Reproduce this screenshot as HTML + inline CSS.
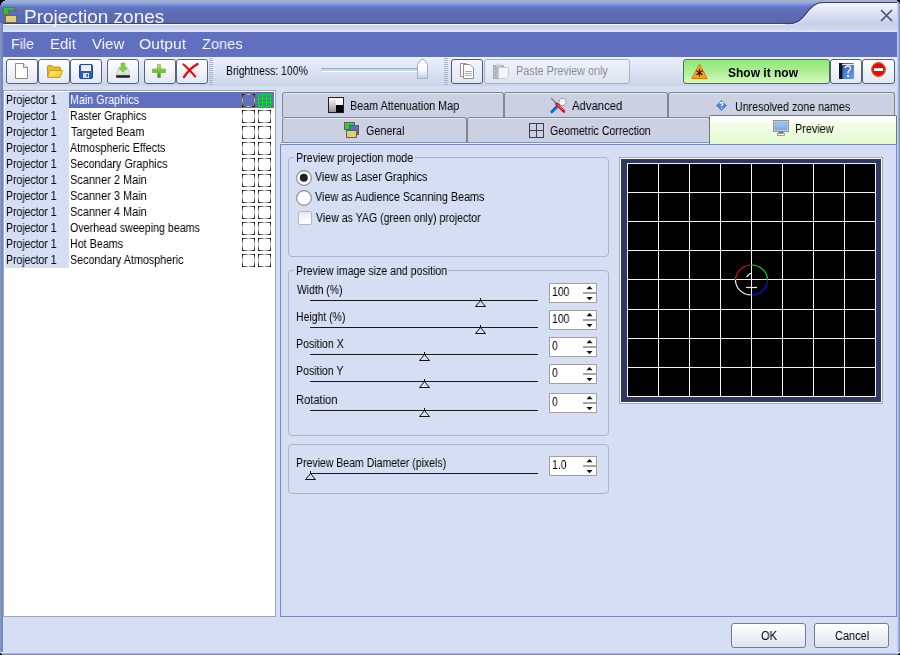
<!DOCTYPE html>
<html><head><meta charset="utf-8"><style>
html,body{margin:0;padding:0;}
body{width:900px;height:655px;overflow:hidden;position:relative;background:#d5def2;font-family:"Liberation Sans",sans-serif;}
.a{position:absolute;}
.t{position:absolute;font-size:12px;line-height:12px;white-space:nowrap;color:#000;transform-origin:0 0;will-change:transform;}
svg{position:absolute;overflow:visible;}
#frameL{left:0;top:23px;width:3px;height:632px;background:linear-gradient(90deg,#8a98b8 0,#8a98b8 1px,#7488d4 1px,#7488d4 3px);}
#frameR{left:897px;top:3px;width:3px;height:652px;background:linear-gradient(90deg,#c4d0ee 0,#c4d0ee 1px,#a0b0e2 1px,#a0b0e2 2px,#8494c4 2px);}
#frameB{left:0;top:652px;width:900px;height:3px;background:linear-gradient(180deg,#dfe6f6 0,#dfe6f6 1px,#9eb0e0 1px,#9eb0e0 2px,#8494c0 2px);}
#title{left:0;top:0;width:900px;height:24px;background:linear-gradient(180deg,#a8b0c8 0,#a8b0c8 1px,#90b0ec 1px,#8eaaea 3px,#6c80cc 6px,#6070bc 9px,#5d6bb4 14px,#5968ae 23px);}
#titleLine{left:0;top:23px;width:900px;height:1px;background:#3a4294;}
#ttl{left:24px;top:7px;font-size:18px;line-height:20px;color:#fff;letter-spacing:.4px;}
#strip{left:3px;top:24px;width:894px;height:8px;background:linear-gradient(180deg,#f4f6fc 0,#f4f6fc 1px,#c9d2ec 1px,#d3dbf0 6px,#e2e8f5 7px,#d7def2 8px);border-top-left-radius:4px;}
#menu{left:3px;top:32px;width:894px;height:25px;background:#6070bf;}
.m{position:absolute;top:36px;font-size:14px;line-height:16px;color:#f4f4ff;}
#tb{left:3px;top:57px;width:894px;height:29px;background:linear-gradient(180deg,#f2f4fc 0,#e7ebfa 3px,#dde3f3 15px,#cbd3e7 29px);}
#tbb{left:3px;top:86px;width:894px;height:4px;background:#d5def2;}
.btn{position:absolute;top:59px;height:25px;width:32px;border:1px solid #566479;border-radius:3px;background:linear-gradient(180deg,#ffffff 0,#f4f7fc 35%,#dfe8f4 100%);box-sizing:border-box;}
.grip{position:absolute;width:4px;background-image:repeating-linear-gradient(180deg,#aab4c8 0,#aab4c8 1px,transparent 1px,transparent 2px);}
#list{left:3px;top:90px;width:273px;height:527px;box-sizing:border-box;border:1px solid #a2a6b4;background:#fff;}
.lc{position:absolute;left:5px;width:64px;height:16px;background:#d5def2;}
.ck{position:absolute;width:13px;height:13px;box-sizing:border-box;border:1px solid #111;}
.tab{position:absolute;box-sizing:border-box;border:1px solid #7d8a8c;border-bottom:none;border-radius:3px 3px 0 0;background:#cbd1e3;box-shadow:inset 0 1px 0 #e6e9f2;}
#panel{left:280px;top:144px;width:617px;height:473px;box-sizing:border-box;border:1px solid #7a8ab8;background:#d5def2;}
.grp{position:absolute;box-sizing:border-box;border:1px solid #a9b3cb;border-radius:4px;}
.gl{position:absolute;background:#d5def2;}
.sl{position:absolute;left:310px;width:228px;height:1px;background:#1a1a1a;}
.sp{position:absolute;left:549px;width:48px;height:20px;box-sizing:border-box;border:1px solid #a0a0a0;background:#fff;}
.spl{position:absolute;left:33px;top:8px;width:14px;height:2px;background:#a4a4a4;}
.obtn{position:absolute;top:623px;height:25px;box-sizing:border-box;border:1px solid #6f7f88;border-radius:3px;background:linear-gradient(180deg,#ffffff 0,#f5f7fb 30%,#e4e9f3 80%,#dbe4f0 100%);}
</style></head><body>
<div id="title" class="a"></div><div id="titleLine" class="a"></div>
<div id="strip" class="a"></div><div id="menu" class="a"></div>
<svg width="900" height="32" style="left:0;top:0"><defs><linearGradient id="tg" x1="0" y1="0" x2="0" y2="1"><stop offset="0" stop-color="#f6f8fd"/><stop offset=".45" stop-color="#dde2f3"/><stop offset="1" stop-color="#c2d0e9"/></linearGradient></defs>
<path d="M786 25 V23.5 L790 23.5 C806 23.5 807 2.5 823 2.5 L897 2.5 L897 25 Z" fill="url(#tg)"/>
<path d="M791 24.4 C807 24.4 808 3.4 823 3.4" fill="none" stroke="#ffffff" stroke-width="1"/>
<path d="M780 23.5 L790 23.5 C806 23.5 807 2.5 823 2.5 L897 2.5" fill="none" stroke="#38408e" stroke-width="1.2"/>
<path d="M881.5 10.5 L891.5 20.5 M891.5 10.5 L881.5 20.5" stroke="#4a5478" stroke-width="1.7" stroke-linecap="round"/>
<rect x="3.5" y="7.5" width="11" height="7" fill="#22cc22" stroke="#686868"/>
<rect x="8.5" y="10.5" width="9" height="9" fill="#5070d0" stroke="#686868"/>
<rect x="5.5" y="15.5" width="11" height="7" fill="#e8cc6c" stroke="#686868"/>
<path d="M0 0 H5 V1 H3 V2 H2 V3 H1 V5 H0 Z" fill="#000"/>
<path d="M897 0 H900 V4 H899 V2 H898 V1 H897 Z" fill="#000"/>
</svg>
<div class="t" style="left:23.95px;top:8px;font-size:18px;line-height:18px;transform:scaleX(1.0538);color:#f4f6ff;">Projection zones</div>
<div class="t" style="left:11.05px;top:36px;font-size:15px;line-height:15px;transform:scaleX(0.9545);color:#f4f4ff;">File</div>
<div class="t" style="left:50.00px;top:36px;font-size:15px;line-height:15px;transform:scaleX(1.0000);color:#f4f4ff;">Edit</div>
<div class="t" style="left:92.00px;top:36px;font-size:15px;line-height:15px;transform:scaleX(1.0000);color:#f4f4ff;">View</div>
<div class="t" style="left:138.95px;top:36px;font-size:15px;line-height:15px;transform:scaleX(1.0465);color:#f4f4ff;">Output</div>
<div class="t" style="left:202.00px;top:36px;font-size:15px;line-height:15px;transform:scaleX(0.9750);color:#f4f4ff;">Zones</div>
<div id="tb" class="a"></div><div id="tbb" class="a"></div>
<div class="btn" style="left:6px"></div>
<div class="btn" style="left:38px"></div>
<div class="btn" style="left:70px"></div>
<div class="btn" style="left:107px"></div>
<div class="btn" style="left:144px"></div>
<div class="btn" style="left:176px"></div>
<div class="grip" style="left:209px;top:58px;height:27px"></div>
<div class="t" style="left:226.13px;top:65px;transform:scaleX(0.8696);color:#000;">Brightness: 100%</div>
<div class="a" style="left:321px;top:68px;width:100px;height:1px;background:#8fb0d2"></div>
<div class="a" style="left:321px;top:69px;width:100px;height:2px;background:#c9d8e9"></div>
<div class="a" style="left:322px;top:71px;width:99px;height:1px;background:#fff"></div>
<svg width="11" height="20" style="left:417px;top:59px"><defs><linearGradient id="thg" x1="0" y1="0" x2="0" y2="1"><stop offset="0" stop-color="#fff"/><stop offset=".55" stop-color="#f8fbff"/><stop offset="1" stop-color="#b8d0ec"/></linearGradient></defs><path d="M0.5 19.5 V5.5 L4 0.5 H7 L10.5 5.5 V19.5 Z" fill="url(#thg)" stroke="#a4acb8"/></svg>
<div class="grip" style="left:444px;top:58px;height:27px"></div>
<div class="btn" style="left:451px;border-color:#4d5a70;background:linear-gradient(180deg,#f4f7fc,#dfe6f2)"></div>
<div class="btn" style="left:484px;width:146px;border-color:#a8b2c6;background:linear-gradient(180deg,#eef2fa,#dde4f1)"></div>
<div class="t" style="left:516.10px;top:65px;transform:scaleX(0.9000);color:#8a8a8a;">Paste Preview only</div>
<div class="btn" style="left:683px;width:147px;border-color:#56647a;background:linear-gradient(180deg,#92e878 0,#aaee90 45%,#d2f8c2 100%)"></div>
<div class="t" style="left:728px;top:67px;font-weight:bold;font-size:12px;letter-spacing:0px">Show it now</div>
<div class="btn" style="left:830px"></div>
<div class="btn" style="left:862px;width:33px"></div>
<div id="list" class="a"></div>
<div class="lc" style="top:92px"></div>
<div class="lc" style="top:108px"></div>
<div class="lc" style="top:124px"></div>
<div class="lc" style="top:140px"></div>
<div class="lc" style="top:156px"></div>
<div class="lc" style="top:172px"></div>
<div class="lc" style="top:188px"></div>
<div class="lc" style="top:204px"></div>
<div class="lc" style="top:220px"></div>
<div class="lc" style="top:236px"></div>
<div class="lc" style="top:252px"></div>
<div class="a" style="left:69px;top:92px;width:205px;height:16px;background:#6070bf"></div>
<div class="t" style="left:6.13px;top:94px;transform:scaleX(0.8727);color:#000;">Projector 1</div>
<div class="t" style="left:70.11px;top:94px;transform:scaleX(0.8933);color:#fff;">Main Graphics</div>
<div class="t" style="left:6.13px;top:110px;transform:scaleX(0.8727);color:#000;">Projector 1</div>
<div class="t" style="left:70.12px;top:110px;transform:scaleX(0.8810);color:#000;">Raster Graphics</div>
<div class="t" style="left:6.13px;top:126px;transform:scaleX(0.8727);color:#000;">Projector 1</div>
<div class="t" style="left:71.00px;top:126px;transform:scaleX(0.9000);color:#000;">Targeted Beam</div>
<div class="t" style="left:6.13px;top:142px;transform:scaleX(0.8727);color:#000;">Projector 1</div>
<div class="t" style="left:70.00px;top:142px;transform:scaleX(0.8952);color:#000;">Atmospheric Effects</div>
<div class="t" style="left:6.13px;top:158px;transform:scaleX(0.8727);color:#000;">Projector 1</div>
<div class="t" style="left:70.10px;top:158px;transform:scaleX(0.8962);color:#000;">Secondary Graphics</div>
<div class="t" style="left:6.13px;top:174px;transform:scaleX(0.8727);color:#000;">Projector 1</div>
<div class="t" style="left:70.09px;top:174px;transform:scaleX(0.9136);color:#000;">Scanner 2 Main</div>
<div class="t" style="left:6.13px;top:190px;transform:scaleX(0.8727);color:#000;">Projector 1</div>
<div class="t" style="left:70.09px;top:190px;transform:scaleX(0.9136);color:#000;">Scanner 3 Main</div>
<div class="t" style="left:6.13px;top:206px;transform:scaleX(0.8727);color:#000;">Projector 1</div>
<div class="t" style="left:70.09px;top:206px;transform:scaleX(0.9136);color:#000;">Scanner 4 Main</div>
<div class="t" style="left:6.13px;top:222px;transform:scaleX(0.8727);color:#000;">Projector 1</div>
<div class="t" style="left:70.11px;top:222px;transform:scaleX(0.8889);color:#000;">Overhead sweeping beams</div>
<div class="t" style="left:6.13px;top:238px;transform:scaleX(0.8727);color:#000;">Projector 1</div>
<div class="t" style="left:70.11px;top:238px;transform:scaleX(0.8947);color:#000;">Hot Beams</div>
<div class="t" style="left:6.13px;top:254px;transform:scaleX(0.8727);color:#000;">Projector 1</div>
<div class="t" style="left:70.10px;top:254px;transform:scaleX(0.8952);color:#000;">Secondary Atmospheric</div>
<svg width="30" height="180" style="left:242px;top:94px"><defs><linearGradient id="ch" x1="0" y1="0" x2="1" y2="0"><stop offset="0" stop-color="#000"/><stop offset=".5" stop-color="#c8c8c8"/><stop offset="1" stop-color="#000"/></linearGradient><linearGradient id="cv" x1="0" y1="0" x2="0" y2="1"><stop offset="0" stop-color="#000"/><stop offset=".5" stop-color="#c8c8c8"/><stop offset="1" stop-color="#000"/></linearGradient><g id="cb"><rect x="0" y="0" width="13" height="1" fill="url(#ch)"/><rect x="0" y="12" width="13" height="1" fill="url(#ch)"/><rect x="0" y="0" width="1" height="13" fill="url(#cv)"/><rect x="12" y="0" width="1" height="13" fill="url(#cv)"/></g></defs><use href="#cb" x="0" y="0"/><use href="#cb" x="0" y="16"/><use href="#cb" x="16" y="16"/><use href="#cb" x="0" y="32"/><use href="#cb" x="16" y="32"/><use href="#cb" x="0" y="48"/><use href="#cb" x="16" y="48"/><use href="#cb" x="0" y="64"/><use href="#cb" x="16" y="64"/><use href="#cb" x="0" y="80"/><use href="#cb" x="16" y="80"/><use href="#cb" x="0" y="96"/><use href="#cb" x="16" y="96"/><use href="#cb" x="0" y="112"/><use href="#cb" x="16" y="112"/><use href="#cb" x="0" y="128"/><use href="#cb" x="16" y="128"/><use href="#cb" x="0" y="144"/><use href="#cb" x="16" y="144"/><use href="#cb" x="0" y="160"/><use href="#cb" x="16" y="160"/><path d="M16.5 0.5 H28.5 V12.5 H16.5 Z M20.5 0.5 V12.5 M24.5 0.5 V12.5 M16.5 4.5 H28.5 M16.5 8.5 H28.5" fill="none" stroke="#18d840" stroke-width="1"/></svg>
<div id="panel" class="a"></div>
<div class="tab" style="left:282px;top:92px;width:222px;height:25px"></div>
<div class="tab" style="left:504px;top:92px;width:164px;height:25px"></div>
<div class="tab" style="left:668px;top:92px;width:227px;height:25px"></div>
<div class="tab" style="left:282px;top:117px;width:185px;height:25px"></div>
<div class="tab" style="left:467px;top:117px;width:243px;height:25px"></div>
<div class="a" style="left:281px;top:142px;width:429px;height:1px;background:#8090c0"></div>
<div class="a" style="left:281px;top:143px;width:429px;height:1px;background:#f0f4d4"></div>
<div class="a" style="left:709px;top:115px;width:188px;height:29px;box-sizing:border-box;border:1px solid #66806a;border-bottom:none;border-radius:2px 2px 0 0;background:linear-gradient(180deg,#ffffff 0,#ffffff 5px,#f7fdea 6px,#eefce0 14px,#e4fbd0 100%)"></div>
<div class="t" style="left:350.10px;top:100px;transform:scaleX(0.8992);color:#000;">Beam Attenuation Map</div>
<div class="t" style="left:572.00px;top:100px;transform:scaleX(0.9423);color:#000;">Advanced</div>
<div class="t" style="left:735.11px;top:101px;transform:scaleX(0.8898);color:#000;">Unresolved zone names</div>
<div class="t" style="left:366.10px;top:125px;transform:scaleX(0.9000);color:#000;">General</div>
<div class="t" style="left:550.12px;top:125px;transform:scaleX(0.8829);color:#000;">Geometric Correction</div>
<div class="t" style="left:795.10px;top:123px;transform:scaleX(0.9024);color:#000;">Preview</div>
<div class="grp" style="left:288px;top:157px;width:321px;height:100px"></div>
<div class="gl" style="left:294px;top:152px;width:121px;height:10px"></div>
<div class="t" style="left:296.11px;top:152px;transform:scaleX(0.8915);color:#000;">Preview projection mode</div>
<svg width="16" height="16" style="left:296px;top:170px"><circle cx="8" cy="8" r="7.4" fill="#fff" stroke="#8a8a8a" stroke-width="1.1"/><circle cx="7.8" cy="7.8" r="4" fill="#222"/></svg>
<svg width="16" height="16" style="left:296px;top:190px"><circle cx="8" cy="8" r="7.4" fill="#fff" stroke="#8a8a8a" stroke-width="1.1"/></svg>
<div class="a" style="left:298px;top:211px;width:14px;height:14px;box-sizing:border-box;border:1px solid #b2b8c2;border-radius:2px;background:linear-gradient(180deg,#e4e6ea 0,#f4f5f7 40%,#ffffff 100%)"></div>
<div class="t" style="left:315.00px;top:171px;transform:scaleX(0.8880);color:#000;">View as Laser Graphics</div>
<div class="t" style="left:315.00px;top:191px;transform:scaleX(0.8984);color:#000;">View as Audience Scanning Beams</div>
<div class="t" style="left:316.00px;top:212px;transform:scaleX(0.8817);color:#000;">View as YAG (green only) projector</div>
<div class="grp" style="left:288px;top:270px;width:321px;height:166px"></div>
<div class="gl" style="left:294px;top:265px;width:154px;height:10px"></div>
<div class="t" style="left:296.12px;top:265px;transform:scaleX(0.8817);color:#000;">Preview image size and position</div>
<div class="t" style="left:297.00px;top:284px;transform:scaleX(0.8627);color:#000;">Width (%)</div>
<div class="t" style="left:296.13px;top:311px;transform:scaleX(0.8704);color:#000;">Height (%)</div>
<div class="t" style="left:296.12px;top:338px;transform:scaleX(0.8846);color:#000;">Position X</div>
<div class="t" style="left:296.12px;top:365px;transform:scaleX(0.8824);color:#000;">Position Y</div>
<div class="t" style="left:296.07px;top:394px;transform:scaleX(0.9286);color:#000;">Rotation</div>
<div class="sl" style="top:300px"></div>
<div class="sl" style="top:327px"></div>
<div class="sl" style="top:354px"></div>
<div class="sl" style="top:381px"></div>
<div class="sl" style="top:410px"></div>
<svg width="13" height="10" style="left:474px;top:298px"><rect x="6" y="0" width="1" height="2" fill="#111"/><path d="M6.5 2.5 L1.5 8.5 H11.5 Z" fill="none" stroke="#111" stroke-width="1"/></svg>
<svg width="13" height="10" style="left:474px;top:325px"><rect x="6" y="0" width="1" height="2" fill="#111"/><path d="M6.5 2.5 L1.5 8.5 H11.5 Z" fill="none" stroke="#111" stroke-width="1"/></svg>
<svg width="13" height="10" style="left:418px;top:352px"><rect x="6" y="0" width="1" height="2" fill="#111"/><path d="M6.5 2.5 L1.5 8.5 H11.5 Z" fill="none" stroke="#111" stroke-width="1"/></svg>
<svg width="13" height="10" style="left:418px;top:379px"><rect x="6" y="0" width="1" height="2" fill="#111"/><path d="M6.5 2.5 L1.5 8.5 H11.5 Z" fill="none" stroke="#111" stroke-width="1"/></svg>
<svg width="13" height="10" style="left:418px;top:408px"><rect x="6" y="0" width="1" height="2" fill="#111"/><path d="M6.5 2.5 L1.5 8.5 H11.5 Z" fill="none" stroke="#111" stroke-width="1"/></svg>
<div class="sp" style="top:283px"><div class="spl"></div><svg width="10" height="20" style="left:35px;top:0"><path d="M4.5 2 L7.6 5.2 L1.4 5.2 Z M1.4 13 L7.6 13 L4.5 16.2 Z" fill="#111"/></svg></div>
<div class="t" style="left:552px;top:286px;transform:scaleX(.87)">100</div>
<div class="sp" style="top:310px"><div class="spl"></div><svg width="10" height="20" style="left:35px;top:0"><path d="M4.5 2 L7.6 5.2 L1.4 5.2 Z M1.4 13 L7.6 13 L4.5 16.2 Z" fill="#111"/></svg></div>
<div class="t" style="left:552px;top:313px;transform:scaleX(.87)">100</div>
<div class="sp" style="top:337px"><div class="spl"></div><svg width="10" height="20" style="left:35px;top:0"><path d="M4.5 2 L7.6 5.2 L1.4 5.2 Z M1.4 13 L7.6 13 L4.5 16.2 Z" fill="#111"/></svg></div>
<div class="t" style="left:552px;top:340px;transform:scaleX(.87)">0</div>
<div class="sp" style="top:364px"><div class="spl"></div><svg width="10" height="20" style="left:35px;top:0"><path d="M4.5 2 L7.6 5.2 L1.4 5.2 Z M1.4 13 L7.6 13 L4.5 16.2 Z" fill="#111"/></svg></div>
<div class="t" style="left:552px;top:367px;transform:scaleX(.87)">0</div>
<div class="sp" style="top:393px"><div class="spl"></div><svg width="10" height="20" style="left:35px;top:0"><path d="M4.5 2 L7.6 5.2 L1.4 5.2 Z M1.4 13 L7.6 13 L4.5 16.2 Z" fill="#111"/></svg></div>
<div class="t" style="left:552px;top:396px;transform:scaleX(.87)">0</div>
<div class="grp" style="left:288px;top:444px;width:321px;height:50px"></div>
<div class="t" style="left:296.12px;top:457px;transform:scaleX(0.8757);color:#000;">Preview Beam Diameter (pixels)</div>
<div class="sl" style="top:473px"></div>
<svg width="13" height="10" style="left:304px;top:471px"><rect x="6" y="0" width="1" height="2" fill="#111"/><path d="M6.5 2.5 L1.5 8.5 H11.5 Z" fill="none" stroke="#111" stroke-width="1"/></svg>
<div class="sp" style="top:456px"><div class="spl"></div><svg width="10" height="20" style="left:35px;top:0"><path d="M4.5 2 L7.6 5.2 L1.4 5.2 Z M1.4 13 L7.6 13 L4.5 16.2 Z" fill="#111"/></svg></div>
<div class="t" style="left:552px;top:459px;transform:scaleX(.87)">1.0</div>
<div class="a" style="left:619px;top:157px;width:264px;height:247px;box-sizing:border-box;border:1px solid #a6a8b0;background:#fff"></div>
<div class="a" style="left:621px;top:159px;width:260px;height:243px;background:#2f3862"></div>
<svg width="264" height="247" style="left:619px;top:157px"><rect x="8" y="6" width="249" height="234" fill="#000"/><rect x="8" y="6" width="1" height="234" fill="#f4f4f4"/><rect x="39" y="6" width="1" height="234" fill="#f4f4f4"/><rect x="70" y="6" width="1" height="234" fill="#f4f4f4"/><rect x="101" y="6" width="1" height="234" fill="#f4f4f4"/><rect x="132" y="6" width="1" height="234" fill="#f4f4f4"/><rect x="163" y="6" width="1" height="234" fill="#f4f4f4"/><rect x="194" y="6" width="1" height="234" fill="#f4f4f4"/><rect x="225" y="6" width="1" height="234" fill="#f4f4f4"/><rect x="256" y="6" width="1" height="234" fill="#f4f4f4"/><rect x="8" y="6" width="249" height="1" fill="#f4f4f4"/><rect x="8" y="35" width="249" height="1" fill="#f4f4f4"/><rect x="8" y="64" width="249" height="1" fill="#f4f4f4"/><rect x="8" y="93" width="249" height="1" fill="#f4f4f4"/><rect x="8" y="122" width="249" height="1" fill="#f4f4f4"/><rect x="8" y="152" width="249" height="1" fill="#f4f4f4"/><rect x="8" y="181" width="249" height="1" fill="#f4f4f4"/><rect x="8" y="210" width="249" height="1" fill="#f4f4f4"/><rect x="8" y="239" width="249" height="1" fill="#f4f4f4"/></svg>
<svg width="40" height="40" style="left:731px;top:260px" viewBox="0 0 40 40"><g fill="none" stroke-width="1.2">
<path d="M4.5 20 A16 15 0 0 1 20.5 5" stroke="#e01010"/>
<path d="M20.5 5 A16 15 0 0 1 36.5 20" stroke="#10e010"/>
<path d="M36.5 20 A16 15 0 0 1 20.5 35" stroke="#1010f0"/>
<path d="M20.5 35 A16 15 0 0 1 4.5 20" stroke="#f0f0f0"/>
<path d="M15.5 17 L19 13.5 H20" stroke="#f0f0f0"/>
<path d="M15 27.5 H26" stroke="#f0f0f0"/>
</g></svg>
<div class="obtn" style="left:731px;width:75px"></div>
<div class="obtn" style="left:814px;width:75px"></div>
<div class="t" style="left:761.07px;top:630px;transform:scaleX(0.9333);color:#000;">OK</div>
<div class="t" style="left:835.09px;top:630px;transform:scaleX(0.9143);color:#000;">Cancel</div>
<svg width="13" height="16" style="left:15px;top:63px" viewBox="0 0 13 16"><path d="M0.5 0.5 H8.5 L12.5 4.5 V15.5 H0.5 Z" fill="#fff" stroke="#8a8a8a"/><path d="M8.5 0.5 V4.5 H12.5" fill="#f4f4f4" stroke="#8a8a8a"/></svg>
<svg width="16" height="13" style="left:47px;top:65px" viewBox="0 0 16 13"><defs><linearGradient id="fg" x1="0" y1="0" x2="1" y2="1"><stop offset="0" stop-color="#fff080"/><stop offset="1" stop-color="#f0c020"/></linearGradient></defs><path d="M0.5 1.5 Q0.5 0.5 1.5 0.5 H5 L6.5 2 H12.5 Q13.5 2 13.5 3 V11.5 H0.5 Z" fill="#e8b828" stroke="#c89810"/><path d="M3 5.5 H15.5 L13 12.5 H0.5 Z" fill="url(#fg)" stroke="#d0a010"/></svg>
<svg width="14" height="15" style="left:79px;top:64px" viewBox="0 0 14 15"><rect x="0.5" y="0.5" width="13" height="14" rx="1.5" fill="#2a5cc8" stroke="#1e48a8"/><rect x="2" y="1" width="10" height="6" fill="#ececec"/><rect x="4" y="9" width="6" height="5" fill="#e0e0e0"/><rect x="7.5" y="10" width="1.5" height="3" fill="#2a5cc8"/></svg>
<svg width="17" height="17" style="left:115px;top:62px" viewBox="0 0 17 17"><defs><linearGradient id="ig" x1="0" y1="0" x2="0" y2="1"><stop offset="0" stop-color="#c4c4c0"/><stop offset=".6" stop-color="#e8e8e4"/><stop offset="1" stop-color="#d0d0cc"/></linearGradient></defs><path d="M3.5 6 Q8 4.5 12.5 6 L14.8 13.5 H1.2 Z" fill="url(#ig)" stroke="#c4c4bc" stroke-width=".8"/><rect x="1" y="13.3" width="14" height="2.5" rx="1" fill="#1e1e1e"/><path d="M6 1 H10 V5.5 H12 L8 10.5 L4 5.5 H6 Z" fill="#78d838" stroke="#60b828" stroke-width=".5"/></svg>
<svg width="14" height="14" style="left:152px;top:64px" viewBox="0 0 14 14"><defs><linearGradient id="pg" x1="0" y1="0" x2="0" y2="1"><stop offset="0" stop-color="#c0e878"/><stop offset=".5" stop-color="#80c030"/><stop offset="1" stop-color="#3c8810"/></linearGradient></defs><path d="M5.5 0.5 H8.5 V5 H13.5 V8.5 H8.5 V13.5 H5.5 V8.5 H0.5 V5 H5.5 Z" fill="url(#pg)" stroke="#68a828" stroke-width=".6"/></svg>
<svg width="24" height="20" style="left:178px;top:60px" viewBox="0 0 24 20"><path d="M5.5 4.5 Q10 8 17.2 16.5" fill="none" stroke="#e01414" stroke-width="2.2" stroke-linecap="round"/><path d="M19.5 4 Q11 9 6 17" fill="none" stroke="#dc1010" stroke-width="2.4" stroke-linecap="round"/></svg>
<svg width="15" height="16" style="left:460px;top:63px" viewBox="0 0 15 16"><path d="M0.5 0.5 H6 L8 2.5 V13.5 H0.5 Z" fill="#fff" stroke="#909090"/><path d="M3.5 1.5 H10 L13.5 5 V15.5 H3.5 Z" fill="#fff" stroke="#909090"/><path d="M5 8.5 H12 M5 10.5 H12 M5 12.5 H12" stroke="#98b4d0" stroke-width="1"/></svg>
<svg width="16" height="16" style="left:493px;top:63px" viewBox="0 0 16 16"><rect x="0.5" y="2.5" width="10" height="13" fill="#b4b8c0" stroke="#a8acb4"/><rect x="3" y="0.5" width="5" height="3" rx="1" fill="#d0d4da"/><path d="M5.5 4.5 H15.5 V12.5 L12.5 15.5 H5.5 Z" fill="#f4f4f6" stroke="#c8ccd2"/></svg>
<svg width="17" height="17" style="left:691px;top:63px" viewBox="0 0 17 17"><path d="M8.5 1 L16.2 15.5 H0.8 Z" fill="#f4a418" stroke="#e07808" stroke-linejoin="round"/><path d="M8.5 6 V13.5 M5.5 7.8 L11.5 11.7 M11.5 7.8 L5.5 11.7" stroke="#111" stroke-width="1.1"/></svg>
<svg width="15" height="16" style="left:839px;top:63px" viewBox="0 0 15 16"><defs><linearGradient id="hb" x1="0" y1="0" x2="1" y2="1"><stop offset="0" stop-color="#2058c0"/><stop offset="1" stop-color="#6aa0f0"/></linearGradient></defs><rect x="0" y="0" width="15" height="16" rx="1" fill="url(#hb)"/><rect x="0" y="0" width="3.5" height="16" fill="#101828"/><rect x="3" y="1" width="12" height="1" fill="#e8f0ff"/><path d="M6.2 5.2 Q6.5 2.8 9 2.8 Q11.6 2.9 11.5 5.3 Q11.4 7 9.6 8 Q9 8.5 9 10.5" fill="none" stroke="#fff" stroke-width="1.3"/><rect x="8.2" y="12" width="1.8" height="2" fill="#fff"/></svg>
<svg width="15" height="15" style="left:871px;top:62px" viewBox="0 0 15 15"><circle cx="7.5" cy="7.5" r="6.8" fill="#d41010" stroke="#e85010" stroke-width="1.2"/><rect x="3" y="6.2" width="9" height="2.8" fill="#fff"/></svg>
<svg width="16" height="16" style="left:328px;top:97px" viewBox="0 0 16 16"><defs><linearGradient id="bg1" x1="0" y1="0" x2="0" y2="1"><stop offset="0" stop-color="#ffffff"/><stop offset="1" stop-color="#909090"/></linearGradient></defs><rect x="0.5" y="0.5" width="15" height="15" fill="url(#bg1)" stroke="#202020"/><rect x="8" y="8" width="7" height="7" fill="#000"/><rect x="8" y="1" width="7" height="7" fill="#f8f8f8"/></svg>
<svg width="17" height="17" style="left:550px;top:97px" viewBox="0 0 17 17"><path d="M1.5 1.5 L7 7" stroke="#7a7a7a" stroke-width="1.3" stroke-linecap="round"/><path d="M1.8 14.8 L9 7.6" stroke="#1a64e0" stroke-width="3" stroke-linecap="round"/><path d="M9 5.5 A3.6 3.6 0 1 1 12.5 8.5 L10 8" fill="#f4f4f4" stroke="#9a9a9a" stroke-width="1"/><path d="M6.5 7 L13.8 14.3" stroke="#d81818" stroke-width="3" stroke-linecap="round"/><path d="M7.5 7.6 L13 13" stroke="#f8a0a0" stroke-width=".8"/></svg>
<svg width="13" height="13" style="left:715px;top:99px" viewBox="0 0 13 13"><path d="M6.5 0.5 L12.5 6.5 L6.5 12.5 L0.5 6.5 Z" fill="#4a88d8" stroke="#c0d4f0"/><path d="M5 4.8 Q5.2 3.4 6.6 3.4 Q8 3.5 8 4.8 Q8 5.8 6.7 6.4 V7.6 M6.7 8.8 V9.8" fill="none" stroke="#fff" stroke-width="1.1"/></svg>
<svg width="16" height="16" style="left:344px;top:122px" viewBox="0 0 16 16"><rect x="0.5" y="0.5" width="10" height="7" fill="#30d030" stroke="#606060"/><rect x="5.5" y="3.5" width="9" height="9" fill="#5070c8" stroke="#606060"/><rect x="2.5" y="8.5" width="10" height="7" fill="#e4cc70" stroke="#606060"/></svg>
<svg width="15" height="15" style="left:529px;top:123px" viewBox="0 0 15 15"><rect x="0.5" y="0.5" width="14" height="14" fill="none" stroke="#404040"/><path d="M7.5 0.5 V14.5 M0.5 7.5 H14.5" stroke="#404040"/></svg>
<svg width="16" height="16" style="left:773px;top:120px" viewBox="0 0 16 16"><defs><linearGradient id="mg" x1="0" y1="0" x2="0" y2="1"><stop offset="0" stop-color="#a0c8f8"/><stop offset="1" stop-color="#80a8e8"/></linearGradient></defs><rect x="0.5" y="0.5" width="15" height="11" fill="#dfe3e6" stroke="#8c9498"/><rect x="2" y="2" width="12" height="8" fill="url(#mg)" stroke="#6a90d8" stroke-width=".6"/><rect x="5.5" y="11.5" width="5" height="2" fill="#70787c"/><rect x="4.5" y="13.5" width="7" height="2" fill="#fff" stroke="#80888c" stroke-width=".8"/></svg>
<div id="frameL" class="a"></div><div id="frameR" class="a"></div><div id="frameB" class="a"></div>
<div class="a" style="left:0;top:653px;width:1px;height:2px;background:#000"></div><div class="a" style="left:1px;top:654px;width:1px;height:1px;background:#000"></div><div class="a" style="left:899px;top:653px;width:1px;height:2px;background:#000"></div><div class="a" style="left:898px;top:654px;width:1px;height:1px;background:#000"></div>
</body></html>
